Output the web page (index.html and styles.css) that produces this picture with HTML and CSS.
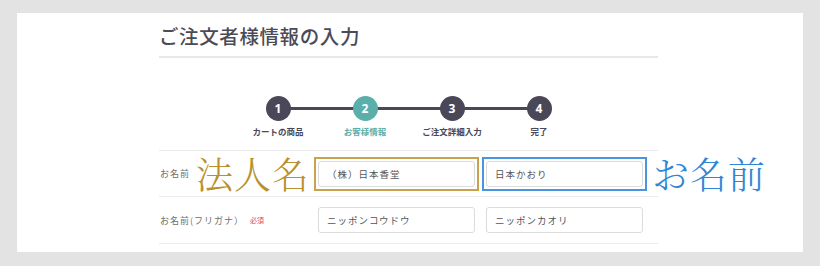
FILE: index.html
```html
<!DOCTYPE html>
<html lang="ja">
<head>
    <meta charset="UTF-8">
    <title>ご注文者様情報の入力</title>
    <link rel="stylesheet" href="styles.css">
</head>
<body>
    <div class="panel">
        <div class="content">
            <h1 class="title">ご注文者様情報の入力</h1>

            <ol class="steps">
                <li class="step done">
                    <span class="num">1</span>
                    <span class="label">カートの商品</span>
                </li>
                <li class="step current">
                    <span class="num">2</span>
                    <span class="label">お客様情報</span>
                </li>
                <li class="step">
                    <span class="num">3</span>
                    <span class="label">ご注文詳細入力</span>
                </li>
                <li class="step">
                    <span class="num">4</span>
                    <span class="label">完了</span>
                </li>
            </ol>

            <div class="form">
                <div class="row">
                    <div class="row-label">
                        <span>お名前</span>
                        <span class="note note-gold">法人名</span>
                    </div>
                    <div class="field field-gold"><input type="text" value="（株）日本香堂"></div>
                    <div class="field field-blue"><input type="text" value="日本かおり"></div>
                    <span class="note note-blue">お名前</span>
                </div>
                <div class="row">
                    <div class="row-label">
                        <span>お名前(フリガナ）</span>
                        <span class="required">必須</span>
                    </div>
                    <div class="field"><input type="text" value="ニッポンコウドウ"></div>
                    <div class="field"><input type="text" value="ニッポンカオリ"></div>
                </div>
            </div>
        </div>
    </div>
</body>
</html>
```

FILE: styles.css
```css
body {
    margin: 0;
    background-color: #e3e3e3;
    font-family: 'Noto Sans CJK JP', 'Noto Sans', sans-serif;
    color: #4a4a55;
}
.panel {
    margin: 13px 17px 0;
    width: 786px;
    height: 239px;
    background-color: #fff;
    overflow: hidden;
}
.content {
    margin-left: 142px;
    width: 499px;
}
.title {
    margin: 0;
    padding: 8px 0 5px;
    font-size: 19.5px;
    font-weight: 500;
    line-height: 30px;
    letter-spacing: 0.6px;
    color: #4b4a56;
    border-bottom: 2px solid #e8e8ea;
}
.steps {
    list-style: none;
    margin: 0;
    padding: 38px 0 0;
    display: flex;
    justify-content: center;
}
.step {
    width: 87px;
    display: flex;
    flex-direction: column;
    align-items: center;
    position: relative;
}
.step::before {
    content: '';
    position: absolute;
    top: 11px;
    left: 50%;
    width: 87px;
    height: 3px;
    background-color: #4a4858;
}
.step:last-child::before {
    display: none;
}
.num {
    position: relative;
    width: 25px;
    height: 25px;
    border-radius: 50%;
    background-color: #4a4858;
    color: #fff;
    font-size: 12px;
    font-weight: 700;
    line-height: 25px;
    text-align: center;
    font-family: 'Open Sans', sans-serif;
}
.label {
    margin-top: 4px;
    font-size: 8.5px;
    font-weight: 700;
    color: #4a4858;
    white-space: nowrap;
}
.current .num {
    background-color: #5aafab;
}
.current .label {
    color: #5aafab;
}
.form {
    margin-top: 13px;
    border-top: 1px solid #ebebeb;
}
.row {
    display: flex;
    align-items: center;
    height: 45px;
    border-bottom: 1px solid #ebebeb;
}
.row + .row {
    height: 46px;
}
.row-label {
    width: 154px;
    flex-shrink: 0;
    display: flex;
    align-items: center;
    font-size: 9px;
    letter-spacing: 1px;
    color: #707070;
    padding-left: 1px;
}
.required {
    margin-left: 6px;
    font-size: 7px;
    letter-spacing: 0;
    color: #e04848;
}
.field {
    width: 157px;
    padding: 2px;
    border: 2px solid transparent;
    flex-shrink: 0;
}
.field + .field {
    margin-left: 3px;
}
.field-gold {
    border-color: #c9a24e;
}
.field-blue {
    border-color: #4a95e0;
}
.field input {
    display: block;
    box-sizing: border-box;
    width: 157px;
    height: 26px;
    margin: 0;
    padding: 0 8px;
    border: 1px solid #dcdcdc;
    border-radius: 3px;
    font-family: 'Noto Sans CJK JP', sans-serif;
    font-size: 9.5px;
    letter-spacing: 1px;
    color: #555;
    background: #fff;
}
.note {
    font-family: 'Noto Serif CJK JP', 'Liberation Serif', serif;
    font-size: 37px;
    font-weight: 300;
    line-height: 1;
    letter-spacing: 1px;
    flex-shrink: 0;
}
.note-gold {
    margin-left: 6px;
    color: #b8902e;
}
.note-blue {
    margin-left: 5px;
    color: #2f86d6;
}
```
